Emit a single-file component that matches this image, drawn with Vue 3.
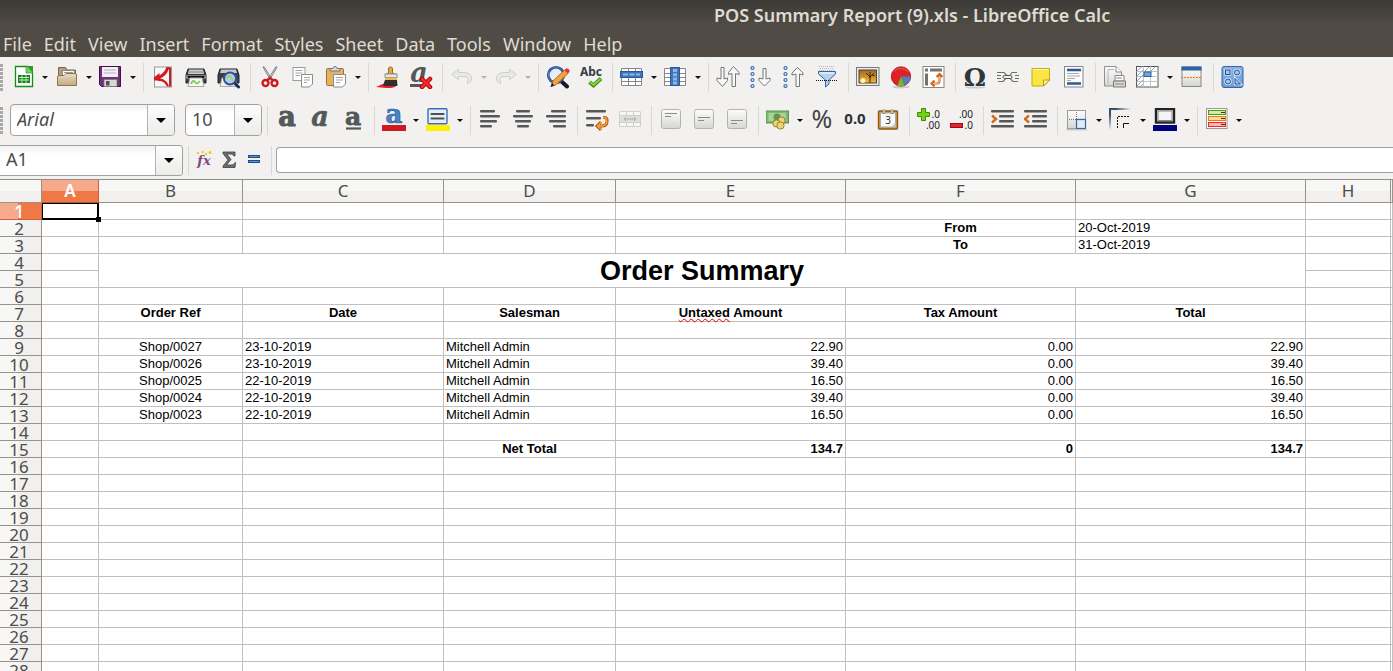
<script setup>
import { h } from 'vue'

const menus = ['File', 'Edit', 'View', 'Insert', 'Format', 'Styles', 'Sheet', 'Data', 'Tools', 'Window', 'Help']

const tool = (icon, label) => ({ icon, label, split: false, off: false })
const split = (icon, label) => ({ icon, label, split: true, off: false })
const off = (item) => ({ ...item, off: true })

const standardGroups = [
  [split('new', 'New'), split('open', 'Open'), split('save', 'Save')],
  [tool('pdf', 'Export as PDF'), tool('print', 'Print'), tool('preview', 'Print Preview')],
  [tool('cut', 'Cut'), tool('copy', 'Copy'), split('paste', 'Paste')],
  [tool('brush', 'Clone Formatting'), tool('clear', 'Clear Formatting')],
  [off(split('undo', 'Undo')), off(split('redo', 'Redo'))],
  [tool('find', 'Find and Replace'), tool('spell', 'Spelling')],
  [split('row', 'Row'), split('column', 'Column')],
  [tool('sort', 'Sort'), tool('asc', 'Sort Ascending'), tool('desc', 'Sort Descending'), tool('filter', 'AutoFilter')],
  [tool('image', 'Insert Image'), tool('chart', 'Insert Chart'), tool('pivot', 'Insert Pivot Table')],
  [tool('omega', 'Special Character'), tool('link', 'Hyperlink'), tool('note', 'Comment'), tool('header', 'Headers and Footers')],
  [tool('area', 'Define Print Area'), split('freeze', 'Freeze Rows and Columns'), tool('split', 'Split Window')],
  [tool('draw', 'Show Draw Functions')]
]

const formatGroups = [
  [tool('bold', 'Bold'), tool('italic', 'Italic'), tool('underline', 'Underline')],
  [split('fontcolor', 'Font Color'), split('highlight', 'Highlighting')],
  [tool('left', 'Align Left'), tool('center', 'Center Horizontally'), tool('right', 'Align Right')],
  [tool('wrap', 'Wrap Text'), off(tool('merge', 'Merge Cells'))],
  [tool('top', 'Align Top'), tool('middle', 'Center Vertically'), tool('bottom', 'Align Bottom')],
  [split('money', 'Currency'), tool('percent', 'Percent'), tool('number', 'Number'), tool('date', 'Date')],
  [tool('adddec', 'Add Decimal Place'), tool('deldec', 'Delete Decimal Place')],
  [tool('indent', 'Increase Indent'), tool('outdent', 'Decrease Indent')],
  [split('borders', 'Borders'), split('borderstyle', 'Border Style'), split('bordercolor', 'Border Color')],
  [split('conditional', 'Conditional Formatting')]
]

const formulaTools = [tool('fx', 'Function Wizard'), tool('sum', 'Sum'), tool('equals', 'Formula')]

const serif = { 'font-family': 'DejaVu Serif, serif', 'font-weight': 'bold', 'text-anchor': 'middle' }
const sans = { 'font-family': 'Noto Sans, sans-serif', 'text-anchor': 'middle' }
const places = { ...sans, 'text-anchor': 'end', 'font-size': 10, x: 23, fill: '#222' }

const letterings = {
  clear: [['a', { ...serif, x: 10, y: 17, 'font-size': 27, 'font-style': 'italic', fill: '#53585a' }]],
  spell: [['Abc', { ...sans, x: 12, y: 11, 'font-size': 12, 'font-weight': 'bold', fill: '#363b3d' }]],
  omega: [['Ω', { ...serif, x: 12, y: 21, 'font-size': 25, fill: '#2e383b' }]],
  bold: [['a', { ...serif, x: 12, y: 18, 'font-size': 27, fill: '#53585a', stroke: '#53585a', 'stroke-width': 1 }]],
  italic: [['a', { ...serif, x: 12, y: 18, 'font-size': 27, 'font-style': 'italic', fill: '#53585a', stroke: '#53585a', 'stroke-width': 0.6 }]],
  underline: [['a', { ...serif, x: 12, y: 17, 'font-size': 25, fill: '#53585a', stroke: '#53585a', 'stroke-width': 0.8 }]],
  fontcolor: [['a', { ...serif, x: 12, y: 15, 'font-size': 26, fill: '#4a83cb', stroke: '#2c5d9f', 'stroke-width': 0.7 }]],
  percent: [['%', { ...sans, x: 12, y: 20, 'font-size': 25, fill: '#3f4344' }]],
  number: [['0.0', { ...sans, x: 12, y: 16, 'font-size': 15, 'font-weight': 'bold', fill: '#2e3335' }]],
  date: [['3', { ...sans, x: 12, y: 16, 'font-size': 10, fill: '#333' }]],
  adddec: [['.0', { ...places, y: 10 }], ['.00', { ...places, y: 21 }]],
  deldec: [['.00', { ...places, y: 10 }], ['.0', { ...places, y: 21 }]],
  fx: [['fx', { ...serif, x: 12, y: 17, 'font-size': 13, 'font-style': 'italic', fill: '#7a4a86' }]]
}

const ToolIcon = ({ name }) => {
  const shape = h('use', { href: '#' + name })
  const letters = (letterings[name] || []).map(([text, attrs]) => h('text', attrs, text))
  const parts = name === 'date' ? [shape, ...letters] : [...letters, shape]
  return h('svg', { class: 'icon', viewBox: '0 0 24 24', 'aria-hidden': 'true' }, parts)
}
ToolIcon.props = ['name']

const columns = ['A', 'B', 'C', 'D', 'E', 'F', 'G', 'H', '']
const letters = 'ABCDEFGHI'.split('')

const cells = {
  F2: ['From', 'head'], G2: ['20-Oct-2019', ''],
  F3: ['To', 'head'], G3: ['31-Oct-2019', ''],
  B4: ['Order Summary', 'title'],
  B7: ['Order Ref', 'head'], C7: ['Date', 'head'], D7: ['Salesman', 'head'],
  E7: ['Untaxed Amount', 'head'], F7: ['Tax Amount', 'head'], G7: ['Total', 'head'],
  D15: ['Net Total', 'head'], E15: ['134.7', 'num strong'], F15: ['0', 'num strong'], G15: ['134.7', 'num strong']
}
const orders = [
  ['Shop/0027', '23-10-2019', '22.90'],
  ['Shop/0026', '23-10-2019', '39.40'],
  ['Shop/0025', '22-10-2019', '16.50'],
  ['Shop/0024', '22-10-2019', '39.40'],
  ['Shop/0023', '22-10-2019', '16.50']
]
orders.forEach(([reference, date, amount], i) => {
  const n = 9 + i
  cells['B' + n] = [reference, 'mid']
  cells['C' + n] = [date, '']
  cells['D' + n] = ['Mitchell Admin', '']
  cells['E' + n] = [amount, 'num']
  cells['F' + n] = ['0.00', 'num']
  cells['G' + n] = [amount, 'num']
})

const rows = Array.from({ length: 28 }, (_, i) => {
  const n = i + 1
  const list = letters
    .filter((c) => !((n === 4 && c > 'B' && c < 'H') || (n === 5 && c > 'A' && c < 'H')))
    .map((c) => {
      const [text, kind] = cells[c + n] || ['', '']
      const merged = n === 4 && c === 'B'
      return { id: c + n, text, kind, colspan: merged ? 6 : 1, rowspan: merged ? 2 : 1 }
    })
  return { n, list }
})
</script>

<template>
  <div class="window">
    <svg class="sprite" aria-hidden="true">
      <defs>
        <linearGradient id="gTan" x1="0" y1="0" x2="0" y2="1"><stop offset="0" stop-color="#e9dcc6" /><stop offset="1" stop-color="#c4a980" /></linearGradient>
        <linearGradient id="gGrey" x1="0" y1="0" x2="0" y2="1"><stop offset="0" stop-color="#fdfdfd" /><stop offset="1" stop-color="#d6d6d4" /></linearGradient>
        <linearGradient id="gSun" x1="0" y1="0" x2="0" y2="1"><stop offset="0" stop-color="#a06a20" /><stop offset="1" stop-color="#f9b233" /></linearGradient>
        <linearGradient id="gBlue" x1="0" y1="0" x2="0" y2="1"><stop offset="0" stop-color="#89b3e6" /><stop offset="1" stop-color="#6a9ad8" /></linearGradient>
        <linearGradient id="gFade" x1="0" y1="0" x2="1" y2="0"><stop offset="0.3" stop-color="#30506f" /><stop offset="1" stop-color="#30506f" stop-opacity="0" /></linearGradient>
        <linearGradient id="gFadeV" x1="0" y1="0" x2="0" y2="1"><stop offset="0.3" stop-color="#30506f" /><stop offset="1" stop-color="#30506f" stop-opacity="0" /></linearGradient>
      </defs>

      <symbol id="new" viewBox="0 0 24 24">
        <path d="M4.5 1.5H17L21.500 7V21.500H4.500Z" fill="#fff" stroke="#158a1d" stroke-width="1.300" />
        <path d="M15 1H22V8Z" fill="#2f9a2c" /><path d="M15 1V8H22" fill="#7ccf63" stroke="#158a1d" stroke-width=".6" />
        <rect x="7" y="10" width="12" height="8" fill="#178717" />
        <path d="M8 12.500H18M8 15H18" stroke="#c9f3bd" stroke-width="1" /><path d="M11 10V18M15 10V18" stroke="#c9f3bd" stroke-width=".8" />
      </symbol>
      <symbol id="open" viewBox="0 0 24 24">
        <path d="M3.500 18V2.500H10.500L12 5H20.500V18Z" fill="#b89c77" stroke="#7c6547" />
        <path d="M7.500 12V5.500H19.500V12" fill="#fff" stroke="#888" /><path d="M9 7.500H18" stroke="#999" />
        <path d="M2.500 12Q2.500 10.500 4 10.500H9L11 8.500H20Q21.500 8.500 21.500 10V20.500H2.500Z" fill="url(#gTan)" stroke="#8d7351" />
      </symbol>
      <symbol id="save" viewBox="0 0 24 24">
        <path d="M.5 1.500H21.500V21.500H2.500L.5 19.500Z" fill="#6d3378" stroke="#3e134b" />
        <rect x="3" y="2" width="16" height="10" fill="#f3eef4" /><path d="M5 5H17M5 8H17" stroke="#b9aebb" />
        <rect x="5" y="14.500" width="13" height="7" fill="#d7d7d7" stroke="#777" stroke-width=".7" /><rect x="7" y="16" width="3.500" height="4.500" fill="#5a4a60" />
      </symbol>
      <symbol id="pdf" viewBox="0 0 24 24">
        <rect x="3.500" y="2" width="17" height="20" fill="#f7f7f6" stroke="#999" />
        <path d="M15.500 2H18.500C17 8 13 12 9 13.500C13 14 17 17 18 21.500H16C14 17 10 15 3 15.500V14C3 12 3 12.500 3 12C9 11 13.500 8 15.500 2Z" fill="#d11a22" />
        <path d="M18 2.500H20V21.500H18Z" fill="#d11a22" /><path d="M3 12.500L8.500 8V16.500Z" fill="#d11a22" />
      </symbol>
      <symbol id="print" viewBox="0 0 24 24">
        <path d="M4 4H20L22 10V18H2V10Z" fill="#3d4043" stroke="#222" /><path d="M5 4.500H19L20 9H4Z" fill="#c8cacb" />
        <path d="M5 7H19" stroke="#8a8c8c" /><rect x="2" y="10" width="20" height="4" fill="#7a7d7e" /><path d="M4 12H20" stroke="#151515" stroke-width="2" />
        <path d="M6 13H18L20 21.500H4Z" fill="#f8fbf5" stroke="#aaa" /><path d="M7 19Q9 14 11 17T16 16" fill="none" stroke="#8bca64" stroke-width="2" />
      </symbol>
      <symbol id="preview" viewBox="0 0 24 24">
        <path d="M3 4H20L22 10V18H1V10Z" fill="#3d4043" stroke="#222" /><path d="M4 4.500H19L20 8H3Z" fill="#c8cacb" /><path d="M5 13H18L20 21.500H3Z" fill="#eef3ea" stroke="#aaa" />
        <path d="M17.500 18L21.500 22" stroke="#1d2a54" stroke-width="3" stroke-linecap="round" />
        <circle cx="13" cy="13.500" r="6" fill="#b9cbe4" stroke="#2f4f9f" stroke-width="2" /><path d="M9 14Q12 9 14 12T16 16" fill="none" stroke="#9fd36f" stroke-width="2" />
      </symbol>
      <symbol id="cut" viewBox="0 0 24 24">
        <path d="M5 2L6 1.800L14 14L12.500 15Z M19 2L18 1.800L10 14L11.500 15Z" fill="#f3f3f3" stroke="#7b7e7e" stroke-width="1" />
        <circle cx="7.500" cy="18" r="3" fill="none" stroke="#d0151b" stroke-width="2.300" /><circle cx="16.500" cy="18" r="3" fill="none" stroke="#d0151b" stroke-width="2.300" />
        <path d="M9 15L12 13L15 15" stroke="#d0151b" stroke-width="2" fill="none" />
      </symbol>
      <symbol id="copy" viewBox="0 0 24 24">
        <rect x="2" y="2.500" width="12" height="13" fill="#fdfdfd" stroke="#9b9d9b" /><path d="M4.500 5.500H11.500M4.500 8H11.500M4.500 10.500H9" stroke="#a6a6a6" />
        <path d="M10.500 9.500H21.500V19L18.500 22H10.500Z" fill="#fdfdfd" stroke="#8b8d8b" /><path d="M13 12.500H19M13 15H19M13 17.500H16" stroke="#a6a6a6" />
      </symbol>
      <symbol id="paste" viewBox="0 0 24 24">
        <rect x="2.500" y="3.500" width="17" height="17" rx="1" fill="#e6b265" stroke="#a66f20" /><path d="M6 6V3.500H9Q9 1.500 11 1.500T13 3.500H16V6Z" fill="#d9dad8" stroke="#777" />
        <path d="M9.500 9.500H21.500V19L18.500 22H9.500Z" fill="#fdfdfd" stroke="#8b8d8b" /><path d="M12 12.500H19M12 15H19M12 17.500H16" stroke="#a6a6a6" />
      </symbol>
      <symbol id="brush" viewBox="0 0 24 24">
        <path d="M0 22Q6 19 10 18L20 21Q18 23.500 10 23Z" fill="#e0232e" /><path d="M12.500 8V3Q14.500 .5 16.500 3V8L21 10H9Z" fill="#e9a648" stroke="#a46c17" />
        <rect x="9" y="9" width="12" height="3.500" fill="#e8e8e8" stroke="#777" stroke-width=".8" /><path d="M9 15H21L21.500 21H9L7 20.500Z" fill="#3a2c28" /><path d="M9 13.800H21" stroke="#e4bd55" stroke-width="2.400" />
      </symbol>
      <symbol id="clear" viewBox="0 0 24 24">
        <rect x="1" y="19" width="12" height="3" fill="#53585a" /><path d="M13 14L21 22M21 14L13 22" stroke="#a00" stroke-width="4.500" stroke-linecap="round" /><path d="M13 14L21 22M21 14L13 22" stroke="#ef2b2d" stroke-width="2.600" stroke-linecap="round" />
      </symbol>
      <symbol id="undo" viewBox="0 0 24 24"><path d="M1.500 9.500L8.500 4.500V7.500H14Q22 8 21.500 14Q21 17.500 17.500 18.500V16Q18.500 15 18 13.500Q17 11.500 13.500 11.500H8.500V14.500Z" fill="#e9e9e8" stroke="#cfcfce" /></symbol>
      <symbol id="redo" viewBox="0 0 24 24"><path d="M22.500 9.500L15.500 4.500V7.500H10Q2 8 2.500 14Q3 17.500 6.500 18.500V16Q5.500 15 6 13.500Q7 11.500 10.500 11.500H15.500V14.500Z" fill="#e9e9e8" stroke="#cfcfce" /></symbol>
      <symbol id="find" viewBox="0 0 24 24">
        <path d="M15 16L21 21.500" stroke="#17181b" stroke-width="4" stroke-linecap="round" /><circle cx="10" cy="10" r="7.800" fill="#e6edf6" stroke="#22468f" stroke-width="2.600" /><circle cx="10" cy="10" r="7.800" fill="none" stroke="#6d94d2" stroke-width=".7" />
        <path d="M5 21.500L7 16L18.500 5L22 8.500L10.500 19.500Z" fill="#f4a23b" stroke="#a3560b" stroke-width=".8" /><path d="M18.500 5L20.500 3.200Q24 4 23.500 6.700L22 8.500Z" fill="#dd3040" /><path d="M4.500 22L6 18L8.500 20.500Z" fill="#222" />
      </symbol>
      <symbol id="spell" viewBox="0 0 24 24">
        <path d="M10.500 17L14.500 20.500L22 13.500" fill="none" stroke="#3f8d0e" stroke-width="3.800" /><path d="M11 17L14.500 20L21.500 14" fill="none" stroke="#84d93c" stroke-width="1.900" />
      </symbol>
      <symbol id="row" viewBox="0 0 24 24">
        <path d="M1.500 3.500H21.500V20.500H1.500ZM1.500 16.500H21.500M8.500 3.500V20.500M15.500 3.500V20.500" fill="#fff" stroke="#888" /><rect x=".5" y="6.500" width="22" height="6" fill="#3f74b8" stroke="#2a5a9c" /><path d="M3 9.500H20" stroke="#8cb8e8" stroke-width="2" stroke-dasharray="5 1.500" />
      </symbol>
      <symbol id="column" viewBox="0 0 24 24">
        <path d="M.5 3.500H21.500V20.500H.5ZM.5 8.500H21.500M.5 12.500H21.500M.5 16.500H21.500" fill="#fff" stroke="#888" /><rect x="6.500" y="2.500" width="9" height="18" fill="#3f74b8" stroke="#2a5a9c" /><path d="M11 4V19.500" stroke="#8cb8e8" stroke-width="4" stroke-dasharray="3 1.200" />
      </symbol>
      <symbol id="sort" viewBox="0 0 24 24">
        <path d="M5 2.500H8V14L11.500 13V15.500L6.500 21.500L1 15.500V13L5 14Z" fill="#fafafa" stroke="#747874" /><path d="M16 21.500H19.500V8.500L23 9.500V7.500L17.500 1.500L12.500 7.500V9.500L16 8.500Z" fill="#fafafa" stroke="#747874" />
      </symbol>
      <symbol id="asc" viewBox="0 0 24 24">
        <g fill="#dce8f8" stroke="#3a6db4" stroke-width="1.200"><circle cx="3.500" cy="3" r="1.500" /><circle cx="3.500" cy="9" r="1.500" /><circle cx="3.500" cy="15" r="1.500" /><circle cx="3.500" cy="21" r="1.500" /></g>
        <path d="M14 3.500H17V14L21 13V15.500L15.500 21L10 15.500V13L14 14Z" fill="#fafafa" stroke="#747874" />
      </symbol>
      <symbol id="desc" viewBox="0 0 24 24">
        <g fill="#dce8f8" stroke="#3a6db4" stroke-width="1.200"><circle cx="3.500" cy="3" r="1.500" /><circle cx="3.500" cy="9" r="1.500" /><circle cx="3.500" cy="15" r="1.500" /><circle cx="3.500" cy="21" r="1.500" /></g>
        <path d="M14 21.500H17.500V9L21 10V8L15.500 2.500L10 8V10L14 9Z" fill="#fafafa" stroke="#747874" />
      </symbol>
      <symbol id="filter" viewBox="0 0 24 24">
        <path d="M4 1.500H20M5 3.500H19M4 5.500H20" stroke="#b5b5b5" stroke-dasharray="1 1" /><path d="M3.500 6.500H20.500V9L14 15V19L10.500 22V15L3.500 9Z" fill="#b7d2f0" stroke="#3465a4" /><path d="M5 8H19" stroke="#fff" /><path d="M1 15.500H23" stroke="#111" stroke-dasharray="1 1" />
      </symbol>
      <symbol id="image" viewBox="0 0 24 24">
        <rect x=".5" y="2.500" width="22.500" height="18" fill="#ececea" stroke="#777a76" /><rect x="3" y="5" width="17.500" height="13" fill="url(#gSun)" stroke="#444" /><circle cx="7" cy="15.500" r="2.500" fill="#fff2b0" /><path d="M14 18V12L10 8M14 12L18 8M14 13V7M16 10L19 11" stroke="#2a1b0c" stroke-width=".9" fill="none" />
      </symbol>
      <symbol id="chart" viewBox="0 0 24 24">
        <ellipse cx="12" cy="22" rx="9" ry="1.500" fill="#ccc" /><circle cx="12" cy="11.500" r="9.700" fill="#df2026" stroke="#a50f14" stroke-width=".8" /><path d="M12 11.500H21.500Q21.500 17 16 20.300Z" fill="#4e7fbe" /><path d="M12 11.500L15.500 20.500Q12 22 8.500 20.500Z" fill="#6cbd2f" /><path d="M5 6.500Q12 0 19 6.500" fill="none" stroke="#ee5a5a" />
      </symbol>
      <symbol id="pivot" viewBox="0 0 24 24">
        <rect x="1" y="1.500" width="21" height="21" fill="#fff" stroke="#858885" /><rect x="3" y="3.500" width="3" height="3" fill="#70736f" /><rect x="8" y="3.500" width="12" height="3" fill="#70736f" /><rect x="3" y="8.500" width="3" height="12" fill="#70736f" /><path d="M10 18.500H15Q17.500 18.500 17.500 15.500V9.500M12.500 15.500L9.500 18.500L12.500 21.500M14.500 12L17.500 9L20.500 12" fill="none" stroke="#d8661a" stroke-width="2.200" /><path d="M11 18.500H15Q17.500 18.500 17.500 15.500V11" fill="none" stroke="#ffd6a6" stroke-width=".7" />
      </symbol>
      <symbol id="omega" viewBox="0 0 24 24"><ellipse cx="12" cy="22.500" rx="10" ry="1" fill="#ccc" /></symbol>
      <symbol id="link" viewBox="0 0 24 24">
        <g fill="none" stroke="#6c706d" stroke-width="1.100"><path d="M1 7.500H8L11 10.500H14L16 7.500H21M1 10.500H5M19 10.500H23M1 13.500H5M19 13.500H23M2 16.500H7L10 13.500H14L17 16.500H22" /></g><rect x="7" y="10.500" width="9" height="3" rx="1.500" fill="#eee" stroke="#555" />
      </symbol>
      <symbol id="note" viewBox="0 0 24 24"><path d="M3 3.500H20.500V15L14.500 21H3Z" fill="#fbe445" stroke="#c9ab0c" /><path d="M20.500 15H14.500V21Z" fill="#fff7a4" stroke="#b89a10" /><path d="M4 4.500H19.500" stroke="#fff8b0" /></symbol>
      <symbol id="header" viewBox="0 0 24 24"><rect x="2.500" y="1.500" width="18.500" height="20.500" fill="#fbfbfb" stroke="#858885" /><path d="M5 5H19M5 18.500H19" stroke="#2d5796" stroke-width="2.400" /><path d="M5 8.500H17M5 11H18M5 13.500H13M5 15.500H9" stroke="#aaa" /></symbol>
      <symbol id="area" viewBox="0 0 24 24">
        <path d="M1.500 1.500H13L18.500 7V21H1.500Z" fill="url(#gGrey)" stroke="#8c8f8c" /><path d="M13 1.500V7H18.500" fill="#fff" stroke="#8c8f8c" /><path d="M5 4.500H11M5 4.500V19" stroke="#b5b5b5" fill="none" /><path d="M12 10.500H21V16H12Z" fill="#fff" stroke="#888" /><path d="M10.500 16H22.500V22H10.500Z" fill="#d8d8d6" stroke="#777" /><path d="M13 13H19M12 19H21" stroke="#888" />
      </symbol>
      <symbol id="freeze" viewBox="0 0 24 24">
        <rect x=".5" y="1.500" width="21.500" height="20.500" fill="#fff" stroke="#565a57" /><path d="M.5 6.500H22M.5 11.500H22M.5 16.500H22M7.500 1.500V22M14.500 1.500V22" stroke="#c2c4c2" /><path d="M1 6L6 1.500M1 11L7 5M1 16L7 10M1 21L7 15M9 6L13 2M15 6L19 2M4 22L7 19" stroke="#86a9cf" /><rect x="8" y="7" width="7" height="4.500" fill="#7aa4d8" stroke="#2f5f9e" />
      </symbol>
      <symbol id="split" viewBox="0 0 24 24"><rect x="2" y="2" width="19" height="19.500" fill="url(#gGrey)" stroke="#858885" /><rect x="1.500" y="1.500" width="20" height="4" fill="#2e62a6" /><path d="M1 12.500H22" stroke="#f57900" stroke-dasharray="2 1" stroke-width="1" /></symbol>
      <symbol id="draw" viewBox="0 0 24 24"><rect x="1" y="1.500" width="21" height="21" rx="2" fill="url(#gBlue)" stroke="#3565a5" /><g fill="none" stroke="#dbe8f8" stroke-width="2.400"><rect x="4.500" y="5" width="4.500" height="4.500" /><circle cx="16" cy="7.500" r="2.500" /><circle cx="7" cy="16.500" r="2.500" /><path d="M14 13.500V19H19.500Z" /></g><g fill="#a9c7ec" stroke="#264f8c" stroke-width="1"><rect x="4.500" y="5" width="4.500" height="4.500" /><circle cx="16" cy="7.500" r="2.500" /><circle cx="7" cy="16.500" r="2.500" /><path d="M14 13.500V19H19.500Z" /></g></symbol>

      <symbol id="underline" viewBox="0 0 24 24"><path d="M5 20.500H20" stroke="#53585a" stroke-width="2.200" /></symbol>
      <symbol id="fontcolor" viewBox="0 0 24 24"><rect x="0" y="17" width="24" height="6" fill="#cc1a20" /></symbol>
      <symbol id="highlight" viewBox="0 0 24 24"><rect x="2" y=".8" width="19" height="15" rx="1" fill="#e4edf8" stroke="#3b6fb3" stroke-width="1.400" /><path d="M5.500 6H17.500M5.500 10.500H17.500" stroke="#4c5052" stroke-width="2.200" stroke-linecap="round" /><rect x="0" y="17" width="24" height="6" fill="#fdf100" /></symbol>
      <symbol id="left" viewBox="0 0 24 24"><g fill="#565958"><rect x="2" y="2" width="15" height="2.600" rx="1" /><rect x="2" y="7" width="20" height="2.600" rx="1" /><rect x="2" y="12" width="17" height="2.600" rx="1" /><rect x="2" y="17" width="12" height="2.600" rx="1" /></g></symbol>
      <symbol id="center" viewBox="0 0 24 24"><g fill="#565958"><rect x="5" y="2" width="14" height="2.600" rx="1" /><rect x="2" y="7" width="20" height="2.600" rx="1" /><rect x="4" y="12" width="16" height="2.600" rx="1" /><rect x="6" y="17" width="12" height="2.600" rx="1" /></g></symbol>
      <symbol id="right" viewBox="0 0 24 24"><g fill="#565958"><rect x="7" y="2" width="15" height="2.600" rx="1" /><rect x="2" y="7" width="20" height="2.600" rx="1" /><rect x="5" y="12" width="17" height="2.600" rx="1" /><rect x="9" y="17" width="13" height="2.600" rx="1" /></g></symbol>
      <symbol id="wrap" viewBox="0 0 24 24"><g fill="#565958"><rect x="1" y="2" width="20" height="2.600" rx="1" /><rect x="1" y="9" width="15" height="2.600" rx="1" /><rect x="1" y="16" width="8" height="2.600" rx="1" /></g><path d="M18 9.500H20Q22.500 10 22 14Q21.500 18 17 18H13M16 14L12 18L16 22" fill="none" stroke="#b85a06" stroke-width="3" /><path d="M18 9.500H20Q22 10 21.800 14Q21.300 18 17 18H13M16 14.500L12.500 18L16 21.500" fill="none" stroke="#fba246" stroke-width="1.300" /></symbol>
      <symbol id="merge" viewBox="0 0 24 24"><path d="M1.500 3.500H22.500V18.500H1.500ZM1.500 7.500H22.500M1.500 14.500H22.500M8.500 3.500V7.500M15.500 3.500V7.500M8.500 14.500V18.500M15.500 14.500V18.500" fill="#f7f7f6" stroke="#d0d0ce" /><rect x="2" y="8" width="20" height="6" fill="#dededc" /><path d="M6 11H18M8 9L6 11L8 13M16 9L18 11L16 13" stroke="#adadab" fill="none" /></symbol>
      <symbol id="top" viewBox="0 0 24 24"><rect x="2.500" y="1.500" width="19" height="19" rx="2" fill="url(#gGrey)" stroke="#b1b3b0" /><path d="M6 5.500H18M6 8.500H12" stroke="#8a8c89" /></symbol>
      <symbol id="middle" viewBox="0 0 24 24"><rect x="2.500" y="1.500" width="19" height="19" rx="2" fill="url(#gGrey)" stroke="#b1b3b0" /><path d="M6 9.500H18M6 12.500H12" stroke="#8a8c89" /></symbol>
      <symbol id="bottom" viewBox="0 0 24 24"><rect x="2.500" y="1.500" width="19" height="19" rx="2" fill="url(#gGrey)" stroke="#b1b3b0" /><path d="M6 12.500H18M6 15.500H12" stroke="#8a8c89" /></symbol>
      <symbol id="money" viewBox="0 0 24 24"><rect x="0" y="3" width="22.500" height="12" fill="#83b872" stroke="#5c8f50" /><rect x="2.500" y="5" width="17" height="8" fill="#a9d596" /><ellipse cx="11" cy="9" rx="3.500" ry="3.500" fill="#5f9451" /><g fill="#ead57a" stroke="#9c8221"><circle cx="15.500" cy="12.500" r="3.600" /><circle cx="10.500" cy="15.500" r="3.600" /><circle cx="14.500" cy="17.500" r="3.600" /></g></symbol>
      <symbol id="date" viewBox="0 0 24 24"><rect x="2.500" y="3" width="19" height="18" rx="1" fill="#d79a45" stroke="#8d5b15" stroke-width="1.400" /><rect x="4.500" y="5" width="15" height="14" fill="#f9f9f7" stroke="#aaa" /><path d="M8 1V6M16 1V6" stroke="#888" stroke-width="2.500" /><path d="M8 1V5M16 1V5" stroke="#eee" /><path d="M19.500 14.500V19H15Z" fill="#c8c8c8" /></symbol>
      <symbol id="adddec" viewBox="0 0 24 24"><path d="M4.500 .5H8.500V4.500H12.500V8.500H8.500V12.500H4.500V8.500H.5V4.500H4.500Z" fill="#73d216" stroke="#3c8a08" /></symbol>
      <symbol id="deldec" viewBox="0 0 24 24"><rect x=".5" y="15.500" width="12" height="4" fill="#e02530" stroke="#9c0b12" /></symbol>
      <symbol id="indent" viewBox="0 0 24 24"><g fill="#565958"><rect x="0" y="2" width="23" height="2.600" rx="1" /><rect x="8" y="7" width="15" height="2.600" rx="1" /><rect x="8" y="12" width="15" height="2.600" rx="1" /><rect x="0" y="17" width="23" height="2.600" rx="1" /></g><path d="M1 7.500L5 11L1 14.500" fill="none" stroke="#d2691e" stroke-width="2.400" /></symbol>
      <symbol id="outdent" viewBox="0 0 24 24"><g fill="#565958"><rect x="0" y="2" width="23" height="2.600" rx="1" /><rect x="8" y="7" width="15" height="2.600" rx="1" /><rect x="8" y="12" width="15" height="2.600" rx="1" /><rect x="0" y="17" width="23" height="2.600" rx="1" /></g><path d="M5 7.500L1 11L5 14.500" fill="none" stroke="#d2691e" stroke-width="2.400" /></symbol>
      <symbol id="borders" viewBox="0 0 24 24"><rect x="2.500" y="2.500" width="18" height="18" fill="url(#gGrey)" stroke="#9a9d9a" /><path d="M11.500 4V20M4 11.500H20" stroke="#777" stroke-dasharray="1 1" /><rect x="11.500" y="11.500" width="9" height="9" fill="#dfeaf7" stroke="#3566a6" stroke-width="1.200" /><path d="M1 21.800H22" stroke="#bbb" /></symbol>
      <symbol id="borderstyle" viewBox="0 0 24 24"><rect x="0" y="0" width="22" height="2" fill="url(#gFade)" /><rect x="0" y="0" width="2" height="22" fill="url(#gFadeV)" /><path d="M8.500 20V8.500H21" fill="none" stroke="#111" stroke-dasharray="2 1" /><path d="M14.500 20V15.500H20" fill="none" stroke="#111" /></symbol>
      <symbol id="bordercolor" viewBox="0 0 24 24"><rect x="3" y="1" width="18" height="13.500" fill="#f4f4f4" stroke="#222" stroke-width="2.400" /><rect x="5" y="3" width="14" height="9.500" fill="none" stroke="#888" /><rect x="0" y="17" width="24" height="6" fill="#000080" /></symbol>
      <symbol id="conditional" viewBox="0 0 24 24"><rect x="1.500" y=".5" width="20.500" height="20" fill="#fff" stroke="#999" /><rect x="3.500" y="2.500" width="17" height="4" fill="#c7efa5" stroke="#4e9a06" /><rect x="3.500" y="8.500" width="17" height="4" fill="#ffd9a5" stroke="#f57900" /><rect x="3.500" y="14.500" width="17" height="4" fill="#ffb3b3" stroke="#ef2929" /><path d="M16 4.500H20M16 10.500H20M16 16.500H20" stroke="#333" /></symbol>

      <symbol id="fx" viewBox="0 0 24 24"><g fill="#f0cf2a"><circle cx="6" cy="5" r="1.300" /><circle cx="10.500" cy="4" r="1.200" /><circle cx="14" cy="6" r="1.300" /><circle cx="18" cy="4.500" r="1.600" /></g></symbol>
      <symbol id="sum" viewBox="0 0 24 24"><path d="M6 4H18V8H17Q16 6 14 6H10L14 11.500L9.500 17H15Q17 17 18 14.500H18.500L18 19.500H6V18L11 12L6 5.500Z" fill="#6b7072" stroke="#3c4143" stroke-width=".8" /></symbol>
      <symbol id="equals" viewBox="0 0 24 24"><g fill="#5b95d6" stroke="#1d4c87" stroke-width="1"><rect x="6.500" y="7.500" width="11" height="2" /><rect x="6.500" y="12.500" width="11" height="2" /></g></symbol>
    </svg>

    <header class="chrome">
      <h1 class="caption">POS Summary Report (9).xls - LibreOffice Calc</h1>
      <nav class="menubar">
        <button v-for="m in menus" :key="m" class="menu" type="button">{{ m }}</button>
      </nav>
    </header>

    <div class="toolbar standard" role="toolbar" aria-label="Standard">
      <span class="grip"></span>
      <template v-for="(group, g) in standardGroups" :key="g">
        <span v-if="g" class="sep"></span>
        <template v-for="t in group" :key="t.icon">
          <button class="tool" :class="{ paired: t.split }" type="button" :aria-label="t.label" :disabled="t.off">
            <ToolIcon :name="t.icon" />
          </button>
          <button v-if="t.split" class="more" type="button" :aria-label="t.label + ' options'" :disabled="t.off"></button>
        </template>
      </template>
    </div>

    <div class="toolbar formatting" role="toolbar" aria-label="Formatting">
      <span class="grip wide"></span>
      <div class="combo font">
        <input class="field slanted" type="text" value="Arial" aria-label="Font Name" />
        <button class="drop" type="button" aria-label="Choose font"></button>
      </div>
      <div class="combo size">
        <input class="field" type="text" value="10" aria-label="Font Size" />
        <button class="drop" type="button" aria-label="Choose size"></button>
      </div>
      <template v-for="(group, g) in formatGroups" :key="g">
        <span class="sep"></span>
        <template v-for="t in group" :key="t.icon">
          <button class="tool" :class="{ paired: t.split }" type="button" :aria-label="t.label" :disabled="t.off">
            <ToolIcon :name="t.icon" />
          </button>
          <button v-if="t.split" class="more" type="button" :aria-label="t.label + ' options'"></button>
        </template>
      </template>
    </div>

    <div class="toolbar formula">
      <div class="combo name">
        <input class="field" type="text" value="A1" aria-label="Name Box" />
        <button class="drop" type="button" aria-label="Choose range"></button>
      </div>
      <span class="sep"></span>
      <button v-for="t in formulaTools" :key="t.icon" class="tool narrow" type="button" :aria-label="t.label">
        <ToolIcon :name="t.icon" />
      </button>
      <span class="sep"></span>
      <input class="line" type="text" aria-label="Input line" />
    </div>

    <main class="sheet">
      <table class="grid">
        <colgroup>
          <col class="w-rows" /><col class="w-a" /><col class="w-b" /><col class="w-c" /><col class="w-d" />
          <col class="w-amount" /><col class="w-amount" /><col class="w-amount" /><col class="w-h" /><col />
        </colgroup>
        <thead>
          <tr>
            <td class="corner"></td>
            <th v-for="c in columns" :key="c" class="col" :class="{ active: c === 'A' }" scope="col">{{ c }}</th>
          </tr>
        </thead>
        <tbody>
          <tr v-for="r in rows" :key="r.n">
            <th class="rowhead" :class="{ active: r.n === 1 }" scope="row"><div class="num-box">{{ r.n }}</div></th>
            <td v-for="c in r.list" :key="c.id" class="cell" :class="c.kind" :colspan="c.colspan" :rowspan="c.rowspan">
              <template v-if="c.id === 'E7'"><span class="misspelt">Untaxed</span> Amount</template>
              <template v-else>{{ c.text }}</template>
              <span v-if="c.id === 'A1'" class="cursor"></span>
            </td>
          </tr>
        </tbody>
      </table>
    </main>
  </div>
</template>

<style>
body {
  margin: 0;
  overflow: hidden;
}
</style>

<style scoped>
.window {
  height: 100vh;
  display: flex;
  flex-direction: column;
  overflow: hidden;
  background: #f2f1f0;
  font-family: "Noto Sans", "Open Sans", sans-serif;
  color: #4c4c4c;
}
.sprite {
  position: absolute;
  width: 0;
  height: 0;
}
button {
  padding: 0;
  border: 0;
  background: none;
  font: inherit;
  color: inherit;
}
.chrome {
  flex: none;
  background: linear-gradient(#3b3a36 0, #504c45 26px);
  color: #dfdbd2;
}
.caption {
  margin: 0;
  padding-left: 714px;
  font-size: 18px;
  font-weight: 600;
  line-height: 30px;
  white-space: nowrap;
}
.menubar {
  display: flex;
  gap: 12px;
  height: 27px;
  padding-left: 3px;
}
.menu {
  font-size: 18px;
  line-height: 26px;
}
.toolbar {
  flex: none;
  display: flex;
  align-items: center;
}
.standard {
  height: 40px;
}
.formatting {
  height: 46px;
}
.formula {
  height: 34px;
  padding-bottom: 2px;
  border-bottom: 1px solid #8f8d8a;
}
.grip {
  flex: none;
  width: 3px;
  height: 27px;
  margin-right: 4px;
  background: repeating-linear-gradient(#a9a8a6 0 3px, #f2f1f0 3px 4px);
}
.grip.wide {
  margin-right: 7px;
}
.sep {
  flex: none;
  width: 8px;
  height: 29px;
  background: linear-gradient(#d9d8d6, #d9d8d6) 4px 0 / 1px 100% no-repeat;
}
.tool {
  flex: none;
  box-sizing: border-box;
  width: 33px;
  height: 30px;
  padding-right: 1px;
  display: flex;
  align-items: center;
  justify-content: center;
}
.tool.paired {
  width: 32px;
  padding-right: 0;
}
.tool.narrow {
  width: 25px;
}
.icon {
  flex: none;
  width: 24px;
  height: 24px;
  overflow: visible;
}
.more {
  flex: none;
  width: 12px;
  height: 30px;
  display: flex;
  align-items: center;
  justify-content: center;
}
.more::before {
  content: "";
  border: 3px solid transparent;
  border-top-color: #111;
  border-bottom: 0;
}
.more:disabled::before {
  border-top-color: #b4b3b1;
}
.combo {
  flex: none;
  box-sizing: border-box;
  display: flex;
  height: 32px;
  border: 1px solid #a3a19e;
  border-radius: 4px;
  background: linear-gradient(#f1f1f1, #fff 8px);
  overflow: hidden;
}
.font {
  width: 165px;
  margin-right: 10px;
}
.size {
  width: 77px;
  margin-right: 1px;
}
.name {
  width: 183px;
  height: 31px;
  margin-right: 1px;
  border-left: 0;
  border-radius: 0 4px 4px 0;
}
.field {
  flex: 1;
  min-width: 0;
  padding: 0 6px 2px;
  border: 0;
  background: none;
  outline: 0;
  font: 18px "Noto Sans", sans-serif;
  color: #4c4c4c;
}
.drop {
  flex: none;
  width: 27px;
  border-left: 1px solid #b5b3b0;
  background: linear-gradient(#fcfcfc, #ececeb);
  display: flex;
  align-items: center;
  justify-content: center;
}
.field.slanted {
  font-style: italic;
}
.drop::before {
  content: "";
  border: 5px solid transparent;
  border-top-color: #000;
  border-bottom: 0;
}
.line {
  flex: 1;
  min-width: 0;
  box-sizing: border-box;
  height: 26px;
  margin-left: 1px;
  padding: 0 6px;
  border: 1px solid #a3a19e;
  border-right: 0;
  border-radius: 4px 0 0 4px;
  background: #fff;
  outline: 0;
  font: 18px "Noto Sans", sans-serif;
}
.sheet {
  flex: 1;
  min-height: 0;
  overflow: hidden;
  background: #fff;
}
.grid {
  width: 100%;
  table-layout: fixed;
  border-collapse: separate;
  border-spacing: 0;
}
.w-rows { width: 42px; }
.w-a { width: 57px; }
.w-b { width: 144px; }
.w-c { width: 201px; }
.w-d { width: 172px; }
.w-amount { width: 230px; }
.w-h { width: 85px; }
.corner,
.col {
  box-sizing: border-box;
  height: 23px;
  padding: 0;
  border-right: 1px solid #98928c;
  border-bottom: 1px solid #98928c;
  background: linear-gradient(#f7f7f6 50%, #f1f0ee 50%);
  font-size: 17px;
  font-weight: 400;
  line-height: 22px;
}
.col.active {
  background: linear-gradient(#f7a98c 50%, #f07746 50%);
  border-color: #d0603a;
  border-bottom-color: #a0583e;
  color: #fff;
  font-weight: 600;
}
.rowhead {
  box-sizing: border-box;
  height: 17px;
  padding: 0;
  border-right: 1px solid #98928c;
  border-bottom: 1px solid #98928c;
  background: linear-gradient(90deg, #f7f7f6 45%, #f1f0ee 45%);
  font-size: 17px;
  font-weight: 400;
}
.rowhead.active {
  background: linear-gradient(90deg, #f7a98c 45%, #f07746 45%);
  border-color: #d0603a;
  color: #fff;
  font-weight: 600;
}
.num-box {
  height: 16px;
  padding-right: 3px;
  line-height: 18px;
  overflow: hidden;
}
.cell {
  position: relative;
  box-sizing: border-box;
  height: 17px;
  padding: 0 2px;
  border-right: 1px solid #c0c0c0;
  border-bottom: 1px solid #c0c0c0;
  font-family: "Liberation Sans", Arial, sans-serif;
  font-size: 13px;
  line-height: 16px;
  color: #000;
  white-space: nowrap;
}
.mid {
  text-align: center;
}
.head {
  text-align: center;
  font-weight: 700;
}
.num {
  text-align: right;
}
.strong {
  font-weight: 700;
}
.title {
  text-align: center;
  font-size: 27px;
  font-weight: 700;
  line-height: 32px;
}
.misspelt {
  text-decoration: underline wavy #e00000 1px;
  text-decoration-skip-ink: none;
}
.cursor {
  position: absolute;
  z-index: 1;
  inset: 0 -1px -1px 0;
  border: solid #000;
  border-width: 1px 2px 2px 1px;
}
.cursor::after {
  content: "";
  position: absolute;
  right: -4px;
  bottom: -4px;
  width: 5px;
  height: 5px;
  background: #000;
}
</style>
